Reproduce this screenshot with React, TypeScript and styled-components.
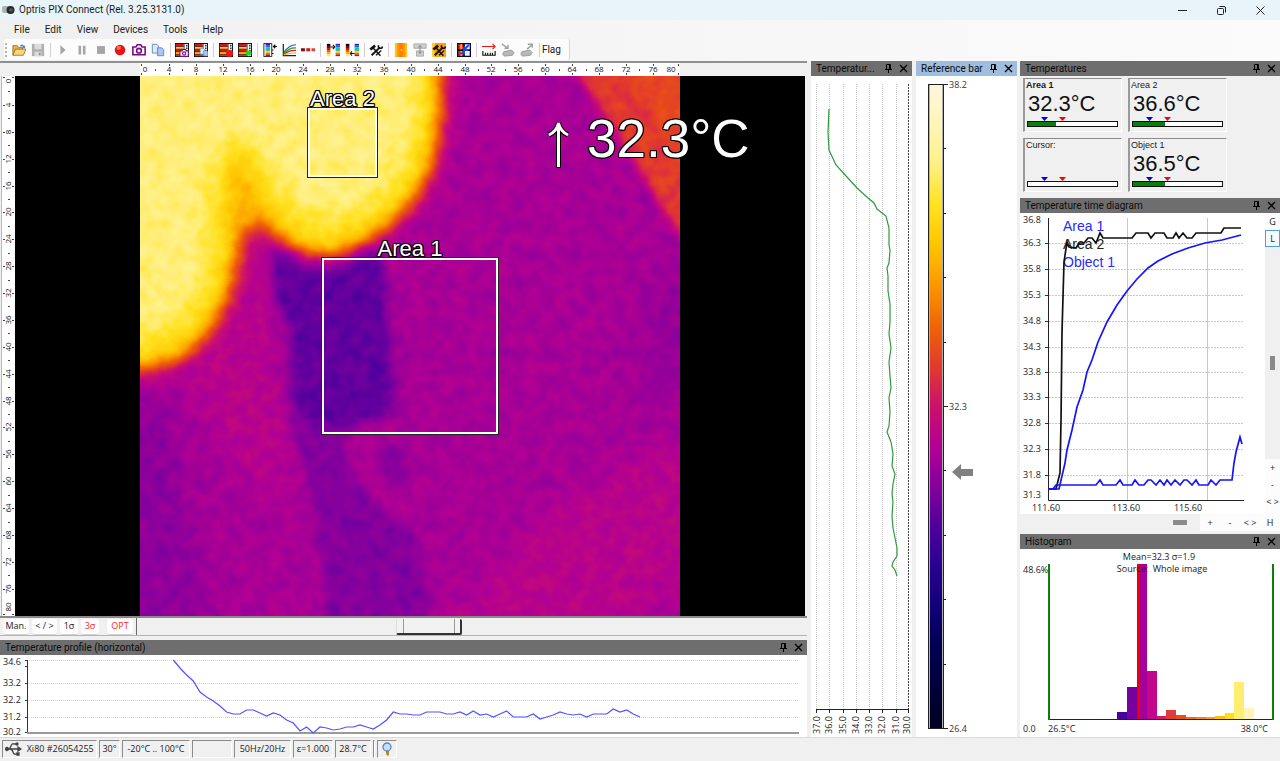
import React from "react";
import styled, { createGlobalStyle, css } from "styled-components";

const UI = `"Open Sans", "Noto Sans", sans-serif`;
const HEADING = `Roboto, "Open Sans", sans-serif`;
const ARIAL = `"Liberation Sans", Arial, sans-serif`;

const Global = createGlobalStyle`
  * { box-sizing: border-box; }
  html, body { margin: 0; padding: 0; }
  body { background: #f0f0f0; font-family: ${UI}; font-size: 9px; line-height: 12px; color: #1a1a1a; }
  button { font: inherit; color: inherit; padding: 0; margin: 0; border: 0; background: none; }
  h1, h2, p { margin: 0; font-size: inherit; font-weight: inherit; }
  svg { display: block; flex: none; }
`;

/* Iron palette, cold to hot, in equal steps */
const PALETTE: [number, number, number][] = [
  [0, 0, 34], [0, 0, 58], [0, 0, 82], [16, 0, 120], [40, 0, 145], [80, 0, 157],
  [132, 0, 157], [178, 0, 148], [204, 16, 108], [226, 58, 45], [240, 100, 5],
  [252, 150, 0], [255, 196, 0], [255, 225, 30], [255, 240, 130], [255, 246, 185], [255, 246, 220],
];
const channel = (i: number) => PALETTE.map((c) => (c[i] / 255).toFixed(3)).join(" ");

/* ---------- frame ---------- */

const Shell = styled.div`
  min-height: 100vh;
  display: flex;
  flex-direction: column;
`;

const TitleBar = styled.header`
  height: 20px;
  flex: none;
  background: #e9f4fa;
  display: flex;
  align-items: center;
  gap: 4px;
  padding: 0 5px 0 2px;
  font-family: ${HEADING};
  font-size: 10px;
  h1 { flex: 1; }
`;

const WindowButton = styled.button`
  width: 30px;
  height: 20px;
  display: flex;
  align-items: center;
  justify-content: center;
  margin-left: 5px;
`;

const MenuBar = styled.nav`
  height: 19px;
  flex: none;
  display: flex;
  align-items: center;
  gap: 15px;
  padding-left: 14px;
  background: linear-gradient(90deg, #f0f0f0, #fbfbfb);
  font-family: ${HEADING};
  font-size: 10px;
`;

const ToolBarRow = styled.div`
  height: 22px;
  flex: none;
  padding-left: 4px;
  background: linear-gradient(90deg, #f0f0f0, #fbfbfb);
`;

const ToolBar = styled.div`
  width: 566px;
  height: 21px;
  display: flex;
  align-items: center;
  justify-content: space-between;
  padding-right: 8px;
  background: #fcfcfc;
  border-radius: 3px;
  border-right: 1px solid #d8d8d8;
`;

const ToolGroup = styled.div`
  display: flex;
`;

const ToolButton = styled.button`
  width: 19px;
  height: 18px;
  display: flex;
  align-items: center;
  justify-content: center;
`;

const FlagButton = styled.button`
  font-size: 10px;
  font-family: ${HEADING};
`;

const Divider = styled.span`
  width: 1px;
  height: 14px;
  background: #cfcfcf;
`;

const Grip = styled.span`
  width: 2px;
  height: 14px;
  margin-left: 1px;
  background: repeating-linear-gradient(#b4b4b4 0 2px, transparent 2px 4px);
`;

const Workspace = styled.main`
  flex: 1;
  display: flex;
  align-items: stretch;
`;

const Column = styled.section<{ $width?: number; $gap?: number }>`
  ${(p) => (p.$width ? css`flex: none; width: ${p.$width}px;` : css`flex: 1; min-width: 0;`)}
  margin-left: ${(p) => p.$gap ?? 0}px;
  display: flex;
  flex-direction: column;
`;

const PanelTitle = styled.header<{ $active?: boolean }>`
  height: 15px;
  flex: none;
  display: flex;
  align-items: center;
  gap: 7px;
  padding: 0 4px 0 5px;
  background: ${(p) => (p.$active ? "#9fbddd" : "#6e6e6e")};
  color: #0c0c0c;
  font-family: ${HEADING};
  font-size: 10px;
  h2 { flex: 1; white-space: nowrap; }
  button { display: flex; }
`;

const PanelBody = styled.div<{ $grow?: boolean }>`
  background: #fff;
  ${(p) => p.$grow && css`flex: 1;`}
`;

function PanelHeader({ title, active }: { title: string; active?: boolean }) {
  return (
    <PanelTitle $active={active}>
      <h2>{title}</h2>
      <button aria-label={`Pin ${title}`}>
        <svg width="7" height="9" viewBox="0 0 7 9" fill="none" stroke="#000">
          <path d="M1.5 5V.5h4V5M0 5.5h7M3.5 5.5V9M4.5 1v4" />
        </svg>
      </button>
      <button aria-label={`Close ${title}`}>
        <svg width="9" height="9" viewBox="0 0 9 9" stroke="#000" strokeWidth="1.4">
          <path d="M1 1l7 7M8 1L1 8" />
        </svg>
      </button>
    </PanelTitle>
  );
}

/* ---------- thermal view ---------- */

const RulerRow = styled.div`
  height: 15px;
  flex: none;
  border-top: 2px solid #909090;
  padding: 0 2px 0 15px;
  display: flex;
  justify-content: center;
`;

const ViewRow = styled.div`
  display: flex;
  flex: none;
  padding: 0 2px 0 1px;
`;

const SideRuler = styled.div`
  width: 14px;
  background: #fff;
  border-left: 1px solid #b8b8b8;
`;

const Stage = styled.div`
  flex: 1;
  background: #000;
  display: flex;
  justify-content: center;
`;

const Frame = styled.div`
  position: relative;
  flex: none;
`;

const outline = css`
  color: #fff;
  text-shadow: 1px 0 #000, -1px 0 #000, 0 1px #000, 0 -1px #000, 1px 1px #000, -1px -1px #000, 1px -1px #000, -1px 1px #000;
  font-family: ${ARIAL};
  white-space: nowrap;
`;

const Area = styled.div<{ $x: number; $y: number; $size: number }>`
  position: absolute;
  left: ${(p) => p.$x}px;
  top: ${(p) => p.$y}px;
  width: ${(p) => p.$size}px;
  height: ${(p) => p.$size}px;
  border: 2px solid #fff;
  outline: 1px solid #222;
  outline-offset: -1px;
  box-shadow: inset 0 0 0 1px #fff;
  span {
    ${outline}
    position: absolute;
    left: 50%;
    bottom: 100%;
    transform: translateX(-50%);
    font-size: 22px;
    line-height: 20px;
  }
`;

const Reading = styled.div`
  ${outline}
  position: absolute;
  left: 407px;
  top: 33px;
  display: flex;
  align-items: flex-end;
  gap: 17px;
  font-size: 53px;
  line-height: 60px;
`;

const steps = Array.from({ length: 21 }, (_, i) => i * 4);

function Ruler({ vertical }: { vertical?: boolean }) {
  const at = (v: number) => (v === 0 ? 5 : v === 80 ? 531 : Math.round(2 + v * 6.72));
  const tick = (v: number) => (v === 80 ? 538 : v === 0 ? 1 : Math.round(v * 6.72) + 2);
  return (
    <svg
      width={vertical ? 13 : 540}
      height={vertical ? 540 : 13}
      fontFamily={UI}
      fontSize="8"
      fill="#111"
      textAnchor="middle"
    >
      <rect width="100%" height="100%" fill="#fff" />
      <g transform={vertical ? "matrix(0 1 1 0 0 0)" : undefined} fill="#444">
        {steps.map((v) => (
          <React.Fragment key={v}>
            <rect x={tick(v)} y="1" width="1" height="2" />
            <rect x={tick(v)} y="10" width="1" height="2" />
            {v < 76 && <rect x={Math.round((v + 2) * 6.72) + 2} y="6" width="1" height="2" />}
          </React.Fragment>
        ))}
      </g>
      {steps.map((v) =>
        vertical ? (
          <text key={v} transform={`translate(9 ${at(v)}) rotate(-90)`}>{v}</text>
        ) : (
          <text key={v} x={at(v)} y="9">{v}</text>
        )
      )}
    </svg>
  );
}

const g = (v: number) => {
  const n = Math.round(v * 255);
  return `rgb(${n},${n},${n})`;
};

function Blur({ id, by }: { id: string; by: number }) {
  return (
    <filter id={id} filterUnits="userSpaceOnUse" x="-60" y="-60" width="660" height="660" colorInterpolationFilters="sRGB">
      <feGaussianBlur stdDeviation={by} />
    </filter>
  );
}

/* Temperatures are drawn as grey levels, then grained and mapped through the palette */
function ThermalImage() {
  return (
    <svg width="540" height="540" viewBox="0 0 540 540" role="img" aria-label="Thermal image">
      <defs>
        <Blur id="near" by={4} />
        <Blur id="soft" by={10} />
        <Blur id="wide" by={13} />
        <filter id="iron" filterUnits="userSpaceOnUse" x="0" y="0" width="540" height="540" colorInterpolationFilters="sRGB">
          <feTurbulence type="fractalNoise" baseFrequency="0.07" numOctaves="2" seed="7" result="n" />
          <feColorMatrix in="n" values="1 0 0 0 0  1 0 0 0 0  1 0 0 0 0  0 0 0 0 1" result="m" />
          <feComposite in="SourceGraphic" in2="m" operator="arithmetic" k2="1" k3="0.08" k4="-0.04" />
          <feComponentTransfer>
            <feFuncR type="table" tableValues={channel(0)} />
            <feFuncG type="table" tableValues={channel(1)} />
            <feFuncB type="table" tableValues={channel(2)} />
          </feComponentTransfer>
        </filter>
      </defs>
      <g filter="url(#iron)">
        <rect width="540" height="540" fill={g(0.424)} />
        <g filter="url(#wide)">
          <path d="M-40 330L30 330L70 560L-40 560Z" fill={g(0.39)} />
          <path d="M104 130L135 165L130 250L160 430L110 400L40 300L90 240Z" fill={g(0.45)} />
          <path d="M560 350V490L480 570H290L400 440Z" fill={g(0.452)} />
          <path d="M505 200H560V330H505Z" fill={g(0.4)} />
        </g>
        <g filter="url(#near)">
          <path d="M133 172L240 166L247 201L256 304L258 336L250 343L211 352L206 377L230 417L272 450L285 500L289 560H186L183 480L172 420L155 361L147 304L151 256L136 226Z" fill={g(0.378)} />
          <path d="M133 172L238 168L244 210L252 320L245 338L208 345L175 350L157 340L151 256L136 226Z" fill={g(0.335)} />
          <path d="M211 356Q202 380 216 400L240 430L262 448L272 436L250 420L232 392L236 368L262 354Z" fill={g(0.436)} />
          <path d="M234 372L262 368L270 408L248 408Z" fill={g(0.385)} />
        </g>
        <path d="M433 -10L540 160L560 190V-10Z" fill={g(0.56)} filter="url(#near)" />
        <path d="M485 -20L550 100V-20Z" fill={g(0.585)} filter="url(#soft)" />
        <g filter="url(#soft)">
          <path
            d="M-40 -40H301V0Q304 58 289 98Q274 134 232 162Q202 182 182 182Q154 178 134 156L106 134L102 156Q98 194 86 228Q66 270 34 286Q14 294 -40 298Z"
            fill={g(0.8)}
          />
        </g>
        <g filter="url(#wide)">
          <path d="M-40 -40H278V30Q276 84 250 112Q222 142 182 146Q150 136 128 96L98 62L70 100Q76 184 54 230Q30 262 -40 264Z" fill={g(0.87)} />
        </g>
        <path d="M98 66L88 150L126 150Z" fill={g(0.72)} filter="url(#soft)" />
      </g>
    </svg>
  );
}

const ScaleRow = styled.div`
  height: 20px;
  flex: none;
  display: flex;
  align-items: center;
  gap: 3px;
  padding-left: 3px;
  border-top: 2px solid #8a8a8a;
  border-bottom: 1px solid #b4b4b4;
`;

const ScaleButton = styled.button<{ $width: number; $hot?: boolean; $lead?: boolean }>`
  width: ${(p) => p.$width}px;
  height: 16px;
  background: #fdfdfd;
  border-radius: 3px;
  border-bottom: 1px solid #d4d4d4;
  white-space: nowrap;
  color: ${(p) => (p.$hot ? "#ff2a2a" : "#1a1a1a")};
  margin-left: ${(p) => (p.$lead ? 5 : 0)}px;
`;

const SpanSlider = styled.input`
  flex: 1;
  min-width: 0;
  height: 17px;
  margin: 0;
  appearance: none;
  background: #f0f0f0;
  border-left: 1px solid #6a6a6a;
  &::-webkit-slider-thumb {
    appearance: none;
    width: 66px;
    height: 16px;
    border: 1px solid #333;
    border-width: 0 2px 2px 1px;
    border-left-color: #ddd;
    border-radius: 2px;
    background:
      linear-gradient(#999, #999) 6px 0 / 1px 100% no-repeat,
      linear-gradient(#999, #999) 57px 0 / 1px 100% no-repeat,
      #f2f2f2;
  }
`;

const Spacer = styled.div`
  height: 4px;
  flex: none;
`;

/* ---------- profiles ---------- */

const profile = [
  5, 13, 20, 26, 37, 42, 46, 51, 57, 59, 59, 55, 55, 58, 61, 58, 60, 65, 68, 76, 72, 78, 72, 73, 75, 74, 72, 72, 70,
  72, 74, 70, 65, 57, 59, 59, 60, 60, 57, 57, 57, 59, 59, 57, 60, 56, 60, 59, 62, 59, 56, 62, 62, 62, 59, 64, 62, 60,
  57, 59, 60, 59, 62, 59, 59, 59, 54, 57, 55, 59, 62,
];

function HorizontalProfile() {
  const rows: [string, number][] = [["34.6", 5], ["33.2", 28], ["32.2", 45], ["31.2", 62], ["30.2", 77]];
  return (
    <svg width="100%" height="82" viewBox="0 0 807 82" preserveAspectRatio="xMinYMid slice" fontFamily={UI} fontSize="9" fill="#222">
      {rows.map(([t, y]) => (
        <g key={t}>
          <text x="3" y={y === 5 ? 10 : y + 3}>{t}</text>
          <path d={`M25 ${y}.5H28`} stroke="#333" />
          {t !== "30.2" && <path d={`M29 ${y}.5H799`} stroke="#d4d4d4" strokeDasharray="1 1" />}
        </g>
      ))}
      <path d="M25 11.5H28M27.5 5V79" stroke="#333" />
      <path d="M27 78H799" stroke="#999" strokeWidth="2" />
      <polyline
        points={profile.map((y, i) => `${(173.3 + i * 6.667).toFixed(1)},${y}`).join(" ")}
        fill="none"
        stroke="#5252ff"
        strokeWidth="1.2"
      />
    </svg>
  );
}

function VerticalProfile() {
  const cols: [string, number][] = [
    ["37.0", 5], ["36.0", 18], ["35.0", 32], ["34.0", 45], ["33.0", 58], ["32.0", 71], ["31.0", 85], ["30.0", 97],
  ];
  return (
    <svg width="101" height="661" viewBox="0 0 101 661" overflow="visible" fontFamily={UI} fontSize="9" fill="#222">
      {cols.map(([t, x]) => (
        <g key={t}>
          <path d={`M${x}.5 8V633`} stroke={t === "30.0" ? "#444" : "#c8c8c8"} strokeDasharray={t === "30.0" ? "2 1" : "1 1"} />
          <path d={`M${x}.5 633V637`} stroke="#222" />
          <text transform={`translate(${x === 5 ? 9 : x === 97 ? 99 : x + 3} 658) rotate(-90)`}>{t}</text>
        </g>
      ))}
      <path d="M5 633.5H98" stroke="#222" />
      <polyline
        fill="none"
        stroke="#2f9a3a"
        strokeWidth="1.2"
        points="18,33 17,56 18,74 25,89 36,101 46,112 57,122 63,127 66,133 75,140 78,152 78,169 79,174 78,187 76,192 77,200 77,215 79,228 79,246 78,258 80,272 78,286 79,300 80,312 78,322 79,336 78,350 76,356 80,366 82,378 81,390 84,398 82,408 81,418 82,426 81,440 82,452 84,462 86,472 86,480 82,486 81,490 84,494 86,500"
      />
    </svg>
  );
}

function ReferenceBar() {
  const ticks = [1, 2, 3, 4, 6, 7, 8, 9];
  return (
    <svg width="101" height="661" viewBox="0 0 101 661" fontFamily={UI} fontSize="9" fill="#333">
      <defs>
        <linearGradient id="scale" x1="0" y1="1" x2="0" y2="0">
          {PALETTE.map((c, i) => (
            <stop key={i} offset={i / 16} stopColor={`rgb(${c.join(",")})`} />
          ))}
        </linearGradient>
      </defs>
      <rect x="12.5" y="8.5" width="15" height="644" fill="#b0b0b0" stroke="#222" />
      <rect x="14" y="9" width="12" height="643" fill="url(#scale)" />
      {ticks.map((t) => (
        <path key={t} d={`M28 ${Math.round(8 + t * 64.4)}.5H30`} stroke="#222" />
      ))}
      <path d="M28 8.5H32M28 330.5H32M28 652.5H32" stroke="#222" />
      <text x="33" y="12">38.2</text>
      <text x="33" y="334">32.3</text>
      <text x="33" y="656">26.4</text>
      <path d="M36 396L45 388V393H57V400H45V404Z" fill="#808080" />
    </svg>
  );
}

/* ---------- right column ---------- */

const Cards = styled.div`
  display: grid;
  grid-template-columns: 99px 99px;
  gap: 6px;
  padding: 2px 0 6px 3px;
`;

const Card = styled.div<{ $bold?: boolean }>`
  height: 54px;
  border: 1px solid #fff;
  border-top-color: #8c8c8c;
  border-left: 2px solid #9a9a9a;
  padding-left: 1px;
  font-family: ${ARIAL};
  font-weight: ${(p) => (p.$bold ? 700 : 400)};
`;

const Value = styled.p`
  height: 26px;
  line-height: 26px;
  font-size: 22px;
  font-weight: 400;
  color: #111;
  padding-left: 2px;
`;

function Gauge({ fill }: { fill: number }) {
  return (
    <svg width="93" height="10" viewBox="0 0 93 10">
      <path d="M15 0H22L18.5 4Z" fill="#0000f0" />
      <path d="M33 0H40L36.5 4Z" fill="#f00" />
      <rect x="1.5" y="4.5" width="90" height="5" fill="#fff" stroke="#111" />
      <rect x="2" y="5" width={fill} height="4" fill="#0a7d0a" />
    </svg>
  );
}

const TimeGrid = styled.div`
  display: grid;
  grid-template-columns: minmax(0, 1fr) 15px;
  grid-template-rows: 301px 17px;
  margin-bottom: 3px;
`;

const VerticalTools = styled.div`
  display: flex;
  flex-direction: column;
  align-items: stretch;
  grid-column: 2;
  padding-bottom: 4px;
  background: #fcfcfc;
`;

const HorizontalTools = styled.div`
  grid-column: 1 / -1;
  display: flex;
  align-items: center;
`;

const SmallButton = styled.button<{ $on?: boolean; $wide?: boolean }>`
  flex: none;
  min-width: ${(p) => (p.$wide ? 20 : 15)}px;
  height: 17px;
  text-align: center;
  white-space: nowrap;
  background: #fcfcfc;
  ${(p) => p.$on && css`border: 1px solid #4f9fdc; background: #f4faff;`}
`;

const Scroll = styled.input<{ $vertical?: boolean }>`
  flex: 1;
  min-width: 0;
  min-height: 0;
  margin: 0;
  appearance: none;
  background: #f0f0f0;
  ${(p) => (p.$vertical ? css`writing-mode: vertical-lr; width: 15px;` : css`height: 17px;`)}
  &::-webkit-slider-thumb {
    appearance: none;
    width: ${(p) => (p.$vertical ? 5 : 14)}px;
    height: ${(p) => (p.$vertical ? 14 : 5)}px;
    background: #8a8a8a;
  }
`;

function TimeChart() {
  const rows: [string, number][] = [
    ["36.8", 7], ["36.3", 30], ["35.8", 56], ["35.3", 82], ["34.8", 108], ["34.3", 134],
    ["33.8", 159], ["33.3", 184], ["32.8", 210], ["32.3", 236], ["31.8", 262], ["31.3", 282],
  ];
  return (
    <svg width="244" height="301" viewBox="0 0 244 301" fontFamily={UI} fontSize="9" fill="#222">
      {rows.map(([t, y], i) => (
        <g key={t}>
          <text x="3" y={y + 3}>{t}</text>
          {i > 0 && i < 11 && (
            <>
              <path d={`M25 ${y}.5H28`} stroke="#333" />
              <path d={`M29 ${y}.5H224`} stroke="#c8c8c8" strokeDasharray="2 1" />
            </>
          )}
        </g>
      ))}
      <path d="M107.5 5V287M187.5 5V287" stroke="#c8c8c8" />
      <path d="M28.5 5V287.5H224" fill="none" stroke="#222" />
      <text x="26" y="298" textAnchor="middle">111.60</text>
      <text x="106" y="298" textAnchor="middle">113.60</text>
      <text x="168" y="298" textAnchor="middle">115.60</text>
      <g fontFamily={ARIAL} fontSize="14">
        <text x="43" y="18" fill="#2828ff">Area 1</text>
        <text x="43" y="36" fill="#222">Area 2</text>
        <text x="43" y="54" fill="#2828ff">Object 1</text>
      </g>
      <g fill="none" strokeWidth="1.7">
        <polyline
          stroke="#111"
          points="28,276 36,276 40,260 41,207 42,119 44,49 47,29 49,34 56,35 59,30 64,30 68,25 72,25 76,30 80,20 83,25 112,25 116,20 128,20 131,25 135,20 144,20 147,25 153,25 156,20 159,25 163,20 167,25 172,25 176,20 201,20 204,15 221,15"
        />
        <polyline
          stroke="#1414ff"
          points="28,276 39,276 45,250 47,237 52,217 57,194 63,177 67,159 72,147 78,129 87,109 97,92 107,78 117,66 128,55 138,48 152,41 168,35 185,30 202,27 221,22"
        />
        <polyline
          stroke="#1414ff"
          points="28,276 33,276 36,272 76,272 80,267 83,272 96,272 100,267 103,272 112,272 115,267 119,272 124,272 128,267 131,267 136,272 140,267 144,272 147,267 151,272 155,267 160,272 164,267 167,267 172,272 176,267 179,272 188,272 191,267 196,272 200,267 212,267 214,250 216,239 220,224 222,231"
        />
      </g>
    </svg>
  );
}

function Histogram() {
  const bars: [number, number, string][] = [
    [97, 7, "#48009a"], [107, 32, "#7800a0"], [117, 155, "#a4009a"], [127, 48, "#c2068e"], [137, 3, "#d01c68"],
    [146, 9, "#e03a3a"], [156, 4, "#e8500f"], [166, 2, "#f07000"], [176, 2, "#f88800"], [186, 2, "#ffa000"],
    [195, 3, "#ffc000"], [205, 6, "#ffde14"], [214, 37, "#ffee70"], [224, 11, "#fff5b8"],
  ];
  return (
    <svg width="260" height="186" viewBox="0 0 260 186" fontFamily={UI} fontSize="9" fill="#222">
      {bars.map(([x, h, c]) => (
        <rect key={x} x={x} y={170 - h} width="10" height={h} fill={c} />
      ))}
      <rect x="118" y="15" width="2" height="156" fill="#f00000" />
      <path d="M29 170.5H253" stroke="#222" />
      <path d="M29 15V171M253 15V171" stroke="#0a800a" strokeWidth="2" />
      <text x="139" y="11" textAnchor="middle">Mean=32.3 σ=1.9</text>
      <text x="142" y="23" textAnchor="middle" xmlSpace="preserve">Source:  Whole image</text>
      <text x="3" y="24">48.6%</text>
      <text x="3" y="183">0.0</text>
      <text x="28" y="183">26.5°C</text>
      <text x="248" y="183" textAnchor="end">38.0°C</text>
    </svg>
  );
}

/* ---------- status bar ---------- */

const StatusBar = styled.footer`
  height: 24px;
  flex: none;
  display: flex;
  align-items: flex-start;
  gap: 2px;
  padding: 2px;
  border-top: 1px solid #dadada;
  background: #f0f0f0;
`;

const Cell = styled.div<{ $width: number }>`
  width: ${(p) => p.$width}px;
  height: 18px;
  display: flex;
  align-items: center;
  justify-content: space-around;
  white-space: nowrap;
  border: 1px solid #fff;
  border-top-color: #8c8c8c;
  border-left-color: #8c8c8c;
`;

/* ---------- toolbar icons ---------- */

const Grid = () => (
  <>
    <rect x=".5" y=".5" width="15" height="15" fill="#fff" stroke="#111" strokeWidth="1.2" />
    <path d="M1 2.5h9M1 8.5h9" stroke="#e01010" strokeWidth="3" />
    <path d="M1 5.5h9M1 11.5h9" stroke="#ffc800" strokeWidth="2.4" />
    <path d="M1 14h9" stroke="#e03010" strokeWidth="2" />
    <path d="M1 4h9M1 7h9M1 10h9M1 13h9M10.5 1v14" stroke="#300" strokeWidth=".8" />
    <path d="M13.5 2v12" stroke="#223" strokeWidth="1.6" strokeDasharray="2 1" />
  </>
);
const Camera = () => (
  <g fill="#fff" stroke="#7a0a86" strokeWidth="1.8">
    <path d="M1 4.5h3.5L6 2h4l1.5 2.5H15v9H1z" />
    <circle cx="8" cy="8.8" r="2.7" />
  </g>
);
const Pages = () => (
  <g fill="#dbe9fb" stroke="#5c84bb">
    <path d="M1.5 1.5h5l2 2v8h-7z" />
    <path d="M7.5 5.5h5l2 2v7h-7z" fill="#a9c8f0" />
  </g>
);
const Hammers = () => (
  <g stroke="#151515" fill="none">
    <path d="M1.5 7.5L7 3" strokeWidth="3" />
    <path d="M4.5 5.5l8.5 9" strokeWidth="1.8" />
    <path d="M3 14L12.5 5" strokeWidth="2.2" />
    <path d="M11 2.5q-1 3 1.5 3.5t3-2" strokeWidth="1.8" />
    <path d="M8 14l6-5.5" strokeWidth="1.5" />
  </g>
);
const Rainbow = ({ x }: { x: number }) => (
  <>
    {["#3a1a9a", "#2060f0", "#10c0e0", "#20c040", "#f0e020", "#f07010", "#d01010"].map((c, i) => (
      <rect key={c} x={x} y={1 + i * 2} width="5" height="2" fill={c} />
    ))}
  </>
);
const Hot = ({ x }: { x: number }) => (
  <>
    {["#180010", "#700a20", "#c02010", "#f06000", "#ffb000", "#ffe860"].map((c, i) => (
      <rect key={c} x={x} y={1 + i * 2.34} width="4" height="2.4" fill={c} />
    ))}
  </>
);

const icons: Record<string, React.ReactNode> = {
  Open: (
    <>
      <path d="M1 14V3h5l1 2h5v3" fill="#e6b44c" stroke="#9a7420" />
      <path d="M1 14L4 7h12l-3 7z" fill="#fbd57a" stroke="#9a7420" />
      <path d="M9 3q3-3 5 1l1-2v4h-4l2-1q-1-2-3-1z" fill="#4a7cc0" />
    </>
  ),
  Save: (
    <>
      <path d="M1 1h14v14H1z" fill="#b0b0b0" />
      <path d="M4 1h8v6H4zM4 10h8v5H4z" fill="#dcdcdc" />
      <path d="M9 11h2v3H9z" fill="#909090" />
    </>
  ),
  Play: <path d="M5 2.5v11l6-5.5z" fill="#a6a6a6" />,
  Pause: <path d="M4 3h3v10H4zM9 3h3v10H9z" fill="#a6a6a6" />,
  Stop: <path d="M3.5 3.5h9v9h-9z" fill="#a6a6a6" />,
  Record: (
    <>
      <circle cx="8" cy="8" r="6" fill="#e81414" />
      <circle cx="6.5" cy="5.5" r="2.5" fill="#ff6a5a" />
    </>
  ),
  Snapshot: <Camera />,
  Copy: <Pages />,
  "Layout snapshot": (
    <>
      <Grid />
      <g transform="translate(5 6) scale(.68)"><Camera /></g>
    </>
  ),
  "Layout copy": (
    <>
      <Grid />
      <g transform="translate(6 5) scale(.68)"><Pages /></g>
    </>
  ),
  "Layout record": (
    <>
      <Grid />
      <circle cx="12" cy="12" r="4" fill="#e81818" />
    </>
  ),
  "Layout run": (
    <>
      <Grid />
      <path d="M9 9.5h3V7l4 4.5-4 4.5v-2.5H9z" fill="#10e010" />
    </>
  ),
  "Colour scale": (
    <>
      <path d="M1 .5h9v15H1z" fill="#fff" stroke="#111" />
      <Rainbow x={3} />
      <path d="M16 4h-4M14 2l-2 2 2 2M10 8h2M10 12h2" stroke="#111" fill="none" strokeWidth="1.3" />
    </>
  ),
  "Line chart": (
    <g fill="none" strokeWidth="1.4">
      <path d="M1.5 1v13.5H16" stroke="#222" />
      <path d="M2 11Q8 2 16 2" stroke="#3058d8" />
      <path d="M2 12Q8 5 16 5.5" stroke="#28a028" />
      <path d="M2 13Q8 8 16 8.5" stroke="#e02020" />
      <path d="M2 13.5Q9 11 16 11.5" stroke="#d8c020" />
    </g>
  ),
  "Alarm list": (
    <>
      <path d="M0 6h4.5v3.5H0z" fill="#801010" />
      <path d="M6 6h4.5v3.5H6z" fill="#d01818" />
      <path d="M12 6h4v3.5h-4z" fill="#e84040" />
    </>
  ),
  "Palette up": (
    <>
      <Hot x={1} />
      <Rainbow x={11} />
      <path d="M5 4.5h5M8 2l2 2.5L8 7" stroke="#111" fill="none" strokeWidth="1.2" />
    </>
  ),
  "Palette down": (
    <>
      <Hot x={1} />
      <Rainbow x={11} />
      <path d="M11 12H6M8 9.5L6 12l2 2.5" stroke="#111" fill="none" strokeWidth="1.2" />
    </>
  ),
  Settings: <Hammers />,
  Focus: (
    <>
      <path d="M1 0h14v16H1z" fill="#ffc020" />
      <path d="M3.5 0h9v16h-9z" fill="#ff9800" />
      <path d="M6 0h4v16H6z" fill="#ff7c00" />
      <circle cx="8.5" cy="8" r="1" fill="#ffe060" />
    </>
  ),
  Shutter: (
    <>
      <path d="M1 1h14v5H1zM4 9h8v6H4z" fill="#cfcfcf" stroke="#a8a8a8" />
      <path d="M8 3v9M6 5l2-2 2 2M6 10l2 2 2-2" stroke="#7c7c7c" fill="none" />
    </>
  ),
  "Palette setup": (
    <>
      <path d="M0 0h16v16H0z" fill="#ffa010" />
      <path d="M0 0h3v16H0z" fill="#ffd030" />
      <Hammers />
    </>
  ),
  Layout: (
    <>
      <path d="M0 0h16v16H0z" fill="#080828" />
      <path d="M1.5 1.5h5.500v5.500h-5.500zM1.5 9h5.500v5.500h-5.500z" fill="#f02818" />
      <path d="M4 1.5h1.5V7H4zM4 9h1.5v5.500H4z" fill="#ffe020" />
      <path d="M9 1.5h5.500V7H9zM9 9h5.500v5.500H9z" fill="#f4ecff" />
      <path d="M13.5 2L8 8M8 4v9M3 12q5 0 5-4h5" stroke="#1848f0" strokeWidth="2.2" fill="none" />
    </>
  ),
  Measure: (
    <g fill="none">
      <path d="M0 4h15.5M12 1l3 3-3 3" stroke="#e81818" strokeWidth="1.3" />
      <path d="M1 9v5h14V9M4 11v3M6.5 11v3M9.5 11v3M12 11v3" stroke="#111" strokeWidth="1.3" />
    </g>
  ),
  "Import device": (
    <>
      <path d="M1 1l7 5M8 2v4H4" stroke="#a0a0a0" strokeWidth="1.6" fill="none" />
      <path d="M3 10l9-2 3 3-2 3-9 1-2-2z" fill="#b8b8b8" stroke="#989898" />
    </>
  ),
  "Export device": (
    <>
      <path d="M8 7l6-5M9 1.5h5v4" stroke="#a0a0a0" strokeWidth="1.6" fill="none" />
      <path d="M2 10l9-2 3 3-2 3-9 1-2-2z" fill="#b8b8b8" stroke="#989898" />
    </>
  ),
};

const groups = [
  ["Open", "Save"],
  ["Play", "Pause", "Stop", "Record", "Snapshot", "Copy"],
  ["Layout snapshot", "Layout copy"],
  ["Layout record", "Layout run"],
  ["Colour scale", "Line chart", "Alarm list"],
  ["Palette up", "Palette down"],
  ["Settings"],
  ["Focus", "Shutter", "Palette setup"],
  ["Layout"],
  ["Measure", "Import device", "Export device"],
];

const readings = [
  { name: "Area 1", value: "32.3°C", fill: 28, bold: true },
  { name: "Area 2", value: "36.6°C", fill: 32 },
  { name: "Cursor:", value: "", fill: 0 },
  { name: "Object 1", value: "36.5°C", fill: 32 },
];

export default function App() {
  return (
    <Shell>
      <Global />
      <TitleBar>
        <svg width="13" height="10" viewBox="0 0 13 10">
          <rect x="0" y="1" width="8" height="7" rx="2" fill="#a9b6b4" />
          <circle cx="8.5" cy="5" r="4" fill="#26282c" />
          <circle cx="9" cy="5" r="1.8" fill="#565a62" />
        </svg>
        <h1>Optris PIX Connect (Rel. 3.25.3131.0)</h1>
        <WindowButton aria-label="Minimize">
          <svg width="9" height="9" stroke="#222"><path d="M0 4.5h9" /></svg>
        </WindowButton>
        <WindowButton aria-label="Restore">
          <svg width="9" height="9" fill="none" stroke="#222">
            <rect x=".5" y="2.5" width="6" height="6" rx="1" />
            <path d="M2.5 .5h4.5q1.5 0 1.5 1.5v4.5" />
          </svg>
        </WindowButton>
        <WindowButton aria-label="Close">
          <svg width="9" height="9" stroke="#222"><path d="M.5 .5l8 8M8.5 .5l-8 8" /></svg>
        </WindowButton>
      </TitleBar>
      <MenuBar>
        {["File", "Edit", "View", "Devices", "Tools", "Help"].map((m) => (
          <button key={m}>{m}</button>
        ))}
      </MenuBar>
      <ToolBarRow>
        <ToolBar role="toolbar">
          <Grip />
          {groups.map((names) => (
            <React.Fragment key={names[0]}>
              <ToolGroup>
                {names.map((n) => (
                  <ToolButton key={n} aria-label={n}>
                    <svg width="14" height="14" viewBox="0 0 16 16">{icons[n]}</svg>
                  </ToolButton>
                ))}
              </ToolGroup>
              <Divider />
            </React.Fragment>
          ))}
          <FlagButton>Flag</FlagButton>
        </ToolBar>
      </ToolBarRow>

      <Workspace>
        <Column>
          <RulerRow><Ruler /></RulerRow>
          <ViewRow>
            <SideRuler><Ruler vertical /></SideRuler>
            <Stage>
              <Frame>
                <ThermalImage />
                <Area $x={167} $y={31} $size={71}><span>Area 2</span></Area>
                <Area $x={181} $y={181} $size={178}><span>Area 1</span></Area>
                <Reading>
                  <svg width="23" height="49" viewBox="0 0 23 49" fill="none" role="img" aria-label="Rising">
                    <path d="M11.5 38V4M2 15Q10 11 11.5 3Q13 11 21 15M11.5 38V48" stroke="#000" strokeWidth="5" />
                    <path d="M11.5 47V4M2 15Q10 11 11.5 3Q13 11 21 15" stroke="#fff" strokeWidth="3" />
                  </svg>
                  32.3°C
                </Reading>
              </Frame>
            </Stage>
          </ViewRow>
          <ScaleRow>
            <ScaleButton $width={26}>Man.</ScaleButton>
            <ScaleButton $width={25}>&lt; / &gt;</ScaleButton>
            <ScaleButton $width={18}>1σ</ScaleButton>
            <ScaleButton $width={18} $hot>3σ</ScaleButton>
            <ScaleButton $width={26} $hot $lead>OPT</ScaleButton>
            <SpanSlider type="range" aria-label="Temperature span" min={0} max={1000} defaultValue={428} />
          </ScaleRow>
          <Spacer />
          <PanelHeader title="Temperature profile (horizontal)" />
          <PanelBody $grow><HorizontalProfile /></PanelBody>
        </Column>

        <Column $width={101} $gap={4}>
          <PanelHeader title="Temperatur..." />
          <PanelBody $grow><VerticalProfile /></PanelBody>
        </Column>

        <Column $width={101} $gap={4}>
          <PanelHeader title="Reference bar" active />
          <PanelBody $grow><ReferenceBar /></PanelBody>
        </Column>

        <Column $width={260} $gap={3}>
          <PanelHeader title="Temperatures" />
          <Cards>
            {readings.map((r) => (
              <Card key={r.name} $bold={r.bold}>
                <p>{r.name}</p>
                <Value>{r.value}</Value>
                <Gauge fill={r.fill} />
              </Card>
            ))}
          </Cards>
          <PanelHeader title="Temperature time diagram" />
          <TimeGrid>
            <PanelBody><TimeChart /></PanelBody>
            <VerticalTools>
              <SmallButton>G</SmallButton>
              <SmallButton $on>L</SmallButton>
              <Scroll $vertical type="range" aria-label="Temperature axis position" min={0} max={100} defaultValue={55} />
              <SmallButton>+</SmallButton>
              <SmallButton>-</SmallButton>
              <SmallButton>&lt; &gt;</SmallButton>
            </VerticalTools>
            <HorizontalTools>
              <Scroll type="range" aria-label="Time axis position" min={0} max={100} defaultValue={92} />
              <SmallButton $wide>+</SmallButton>
              <SmallButton $wide>-</SmallButton>
              <SmallButton $wide>&lt; &gt;</SmallButton>
              <SmallButton $wide>H</SmallButton>
            </HorizontalTools>
          </TimeGrid>
          <PanelHeader title="Histogram" />
          <PanelBody $grow><Histogram /></PanelBody>
        </Column>
      </Workspace>

      <StatusBar>
        <Cell $width={95}>
          <svg width="17" height="14" viewBox="0 0 17 14" fill="none" stroke="#444" strokeWidth="1.3">
            <path d="M0 7h14M3 7q2 0 3-3t3-2h2M5 7q2 0 3 3t3 2h2" />
            <circle cx="2" cy="7" r="1.5" fill="#444" />
            <path d="M13 5l3 2-3 2z" fill="#444" />
            <circle cx="12" cy="2" r="1" fill="#444" />
            <path d="M12 11h2v2h-2z" fill="#444" />
          </svg>
          Xi80 #26054255
        </Cell>
        <Cell $width={21}>30°</Cell>
        <Cell $width={68}>-20°C .. 100°C</Cell>
        <Cell $width={40} />
        <Cell $width={57}>50Hz/20Hz</Cell>
        <Cell $width={40}>ε=1.000</Cell>
        <Cell $width={36}>28.7°C</Cell>
        <Cell $width={1} />
        <Cell $width={20}>
          <svg width="12" height="14" viewBox="0 0 12 14">
            <path d="M5 8h3v5l-1 1-2-2z" fill="#b08a30" />
            <circle cx="6" cy="5" r="4" fill="#c4e0f8" stroke="#5f86b4" strokeWidth="1.3" />
          </svg>
        </Cell>
      </StatusBar>
    </Shell>
  );
}
